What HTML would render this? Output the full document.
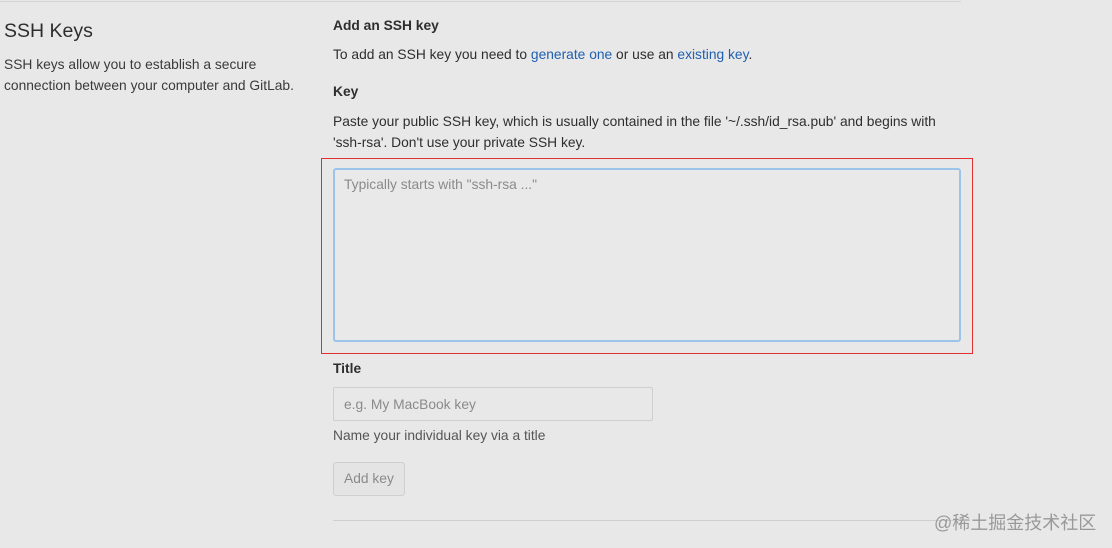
<!DOCTYPE html>
<html><head><style>
body{margin:0;width:1112px;height:548px;background:#e8e8e8;font-family:"Liberation Sans",sans-serif;color:#2e2e2e;position:relative;overflow:hidden;font-size:13.8px}
.a{position:absolute;white-space:nowrap}
a{color:#1f5fb0;text-decoration:none}
</style></head><body>
<div class="a" style="left:0;top:1px;width:961px;height:1px;background:#d4d4d4"></div>
<div class="a" style="left:4px;top:20px;font-size:19.5px;color:#2e2e2e">SSH Keys</div>
<div class="a" style="left:4px;top:54px;line-height:21px;color:#3a3a3a">SSH keys allow you to establish a secure<br>connection between your computer and GitLab.</div>
<div class="a" style="left:333px;top:18px;font-weight:bold;color:#2e2e2e">Add an SSH key</div>
<div class="a" style="left:333px;top:47px">To add an SSH key you need to <a>generate one</a> or use an <a>existing key</a>.</div>
<div class="a" style="left:333px;top:84px;font-weight:bold">Key</div>
<div class="a" style="left:333px;top:111px;line-height:21px">Paste your public SSH key, which is usually contained in the file '~/.ssh/id_rsa.pub' and begins with<br>'ssh-rsa'. Don't use your private SSH key.</div>
<div class="a" style="left:321px;top:158px;width:650px;height:194px;border:1px solid #e03030"></div>
<div class="a" style="left:333px;top:168px;width:624px;height:170px;border:2px solid #9cc3ea;border-radius:3px;background:#e9e9e9"></div>
<div class="a" style="left:344px;top:177px;color:#8a8a8a">Typically starts with "ssh-rsa ..."</div>
<div class="a" style="left:333px;top:361px;font-weight:bold">Title</div>
<div class="a" style="left:333px;top:387px;width:318px;height:32px;border:1px solid #cfcfcf;border-radius:2px"></div>
<div class="a" style="left:344px;top:397px;color:#8a8a8a">e.g. My MacBook key</div>
<div class="a" style="left:333px;top:428px;color:#555">Name your individual key via a title</div>
<div class="a" style="left:333px;top:462px;width:70px;height:32px;border:1px solid #cfcfcf;border-radius:3px;background:#e4e4e4"></div>
<div class="a" style="left:344px;top:471px;color:#8a8a8a">Add key</div>
<div class="a" style="left:333px;top:520px;width:628px;height:1px;background:#cfcfcf"></div>
<div class="a" style="left:934px;top:509px;font-size:18px;color:#999;font-family:'Liberation Sans','Noto Sans CJK SC',sans-serif">@稀土掘金技术社区</div>
</body></html>
